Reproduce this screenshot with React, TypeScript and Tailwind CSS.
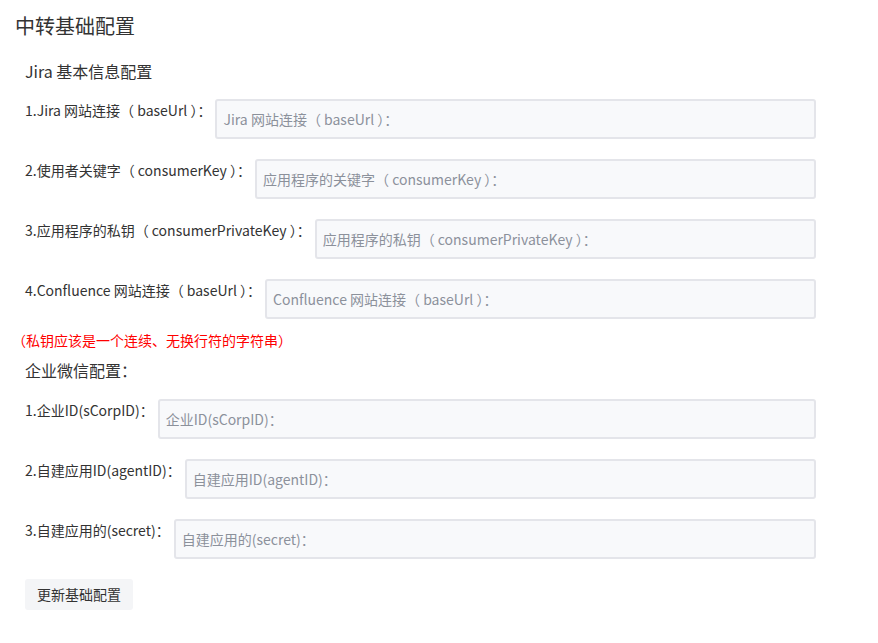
import React from 'react';

interface FieldProps {
  label: string;
  placeholder: string;
}

const Field: React.FC<FieldProps> = ({ label, placeholder }) => (
  <div className="flex items-start mb-[20px]">
    <label className="text-[14px] leading-[22px] text-[#333] whitespace-nowrap">{label}</label>
    <input
      className="ml-[4px] flex-1 h-[40px] rounded-[3px] border-2 border-[#e4e5ea] bg-[#f8f9fb] px-[6px] text-[14px] text-[#333] outline-none placeholder:text-[#8c919b]"
      placeholder={placeholder}
    />
  </div>
);

const jiraFields = [
  { label: '1.Jira 网站连接（ baseUrl ）：', placeholder: 'Jira 网站连接（ baseUrl ）：' },
  { label: '2.使用者关键字（ consumerKey ）：', placeholder: '应用程序的关键字（ consumerKey ）：' },
  { label: '3.应用程序的私钥（ consumerPrivateKey ）：', placeholder: '应用程序的私钥（ consumerPrivateKey ）：' },
  { label: '4.Confluence 网站连接（ baseUrl ）：', placeholder: 'Confluence 网站连接（ baseUrl ）：' },
];

const wechatFields = [
  { label: '1.企业ID(sCorpID)：', placeholder: '企业ID(sCorpID)：' },
  { label: '2.自建应用ID(agentID)：', placeholder: '自建应用ID(agentID)：' },
  { label: '3.自建应用的(secret)：', placeholder: '自建应用的(secret)：' },
];

export default function App() {
  return (
    <div
      className="min-h-screen bg-white pl-[15px] pt-[12px]"
      style={{ fontFamily: '"Noto Sans CJK SC", "Noto Sans", sans-serif' }}
    >
      <h1 className="text-[20px] leading-[28px] text-[#333] font-normal">中转基础配置</h1>

      <div className="w-[801px] pl-[10px]">
        <h2 className="mt-[21px] text-[16px] leading-[20px] text-[#333] font-normal">Jira 基本信息配置</h2>
        <div className="mt-[18px]">
          {jiraFields.map(f => (
            <Field key={f.label} label={f.label} placeholder={f.placeholder} />
          ))}
        </div>
      </div>

      <p className="-mt-[9px] -ml-[3px] text-[14px] leading-[20px] text-[#f00]">（私钥应该是一个连续、无换行符的字符串）</p>

      <div className="w-[801px] pl-[10px]">
        <h2 className="mt-[10px] text-[16px] leading-[20px] text-[#333] font-normal">企业微信配置：</h2>
        <div className="mt-[19px]">
          {wechatFields.map(f => (
            <Field key={f.label} label={f.label} placeholder={f.placeholder} />
          ))}
        </div>
        <button className="h-[31px] px-[12px] rounded-[3px] bg-[#f4f5f7] text-[14px] text-[#333]">
          更新基础配置
        </button>
      </div>
    </div>
  );
}
